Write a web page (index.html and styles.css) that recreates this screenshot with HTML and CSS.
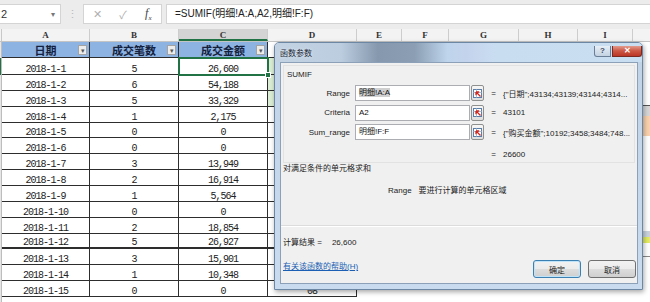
FILE: index.html
```html
<!DOCTYPE html>
<html lang="zh">
<head>
<meta charset="utf-8">
<title>SUMIF 函数参数</title>
<link rel="stylesheet" href="styles.css">
</head>
<body>
	<div class="fbar">
		<div class="namebox"><span>2</span><span class="caret">&#9662;</span></div>
		<div class="grip">&#8942;</div>
		<div class="fxbox">
			<span class="fxbtn">&#10005;</span>
			<span class="fxbtn">&#10003;</span>
			<span class="fxbtn fx">f<sub>x</sub></span>
		</div>
		<div class="formula">=SUMIF(明细!A:A,A2,明细!F:F)</div>
	</div>

	<div class="colheads">
		<div class="corner"></div>
		<div class="ch w-a">A</div>
		<div class="ch w-b">B</div>
		<div class="ch w-c sel">C</div>
		<div class="ch w-d">D</div>
		<div class="ch w-e">E</div>
		<div class="ch w-f">F</div>
		<div class="ch w-g">G</div>
		<div class="ch w-h">H</div>
		<div class="ch w-i">I</div>
		<div class="ch w-j"></div>
	</div>

	<div class="sheet">
		<div class="rowstrip"><div class="rowsel"></div></div>
		<div class="table">
			<div class="c hd">日期<span class="dd">&#9662;</span></div>
			<div class="c hd">成交笔数<span class="dd">&#9662;</span></div>
			<div class="c hd">成交金额<span class="dd">&#9662;</span></div>
			<div class="c hd-d"></div>

			<div class="c">2018-1-1</div><div class="c">5</div><div class="c active">26,600<span class="handle"></span></div><div class="c green"></div>
			<div class="c">2018-1-2</div><div class="c">6</div><div class="c">54,188</div><div class="c green"></div>
			<div class="c">2018-1-3</div><div class="c">5</div><div class="c">33,329</div><div class="c green"></div>
			<div class="c">2018-1-4</div><div class="c">1</div><div class="c">2,175</div><div class="c"></div>
			<div class="c">2018-1-5</div><div class="c">0</div><div class="c">0</div><div class="c"></div>
			<div class="c">2018-1-6</div><div class="c">0</div><div class="c">0</div><div class="c"></div>
			<div class="c">2018-1-7</div><div class="c">3</div><div class="c">13,949</div><div class="c"></div>
			<div class="c">2018-1-8</div><div class="c">2</div><div class="c">16,914</div><div class="c"></div>
			<div class="c">2018-1-9</div><div class="c">1</div><div class="c">5,564</div><div class="c"></div>
			<div class="c">2018-1-10</div><div class="c">0</div><div class="c">0</div><div class="c"></div>
			<div class="c">2018-1-11</div><div class="c">2</div><div class="c">18,854</div><div class="c"></div>
			<div class="c thick">2018-1-12</div><div class="c thick">5</div><div class="c thick">26,927</div><div class="c thick"></div>
			<div class="c">2018-1-13</div><div class="c">3</div><div class="c">15,901</div><div class="c"></div>
			<div class="c">2018-1-14</div><div class="c">1</div><div class="c">10,348</div><div class="c"></div>
			<div class="c">2018-1-15</div><div class="c">0</div><div class="c">0</div><div class="c">08</div>
		</div>
		<div class="rest">
			<div class="colj">
				<div class="j-head"></div>
				<div class="j-peach"></div>
				<div class="j-gray"></div>
				<div class="j-yellow"></div>
				<div class="j-box">C</div>
			</div>
		</div>
	</div>

	<div class="dialog">
		<div class="titlebar">
			<span class="title">函数参数</span>
			<div class="caps">
				<span class="cap help">?</span>
				<span class="cap close">&#10005;</span>
			</div>
		</div>
		<div class="body">
			<div class="group">
				<div class="fname">SUMIF</div>
				<div class="args">
					<div class="arg">
						<span class="lbl">Range</span>
						<span class="input"><span class="hl">明细!A:A</span></span>
						<span class="ref"><svg width="9" height="9" viewBox="0 0 9 9"><rect x="0.5" y="0.5" width="8" height="8" fill="#fff" stroke="#5b7fa8"/><path d="M0.5 3.5h8M3.5 0.5v8" stroke="#a9bdd4"/><path d="M7.5 7.5L3 3M3 3h3.2M3 3v3.2" stroke="#d2261d" stroke-width="1.3" fill="none"/></svg></span>
						<span class="eq">=</span>
						<span class="val">{"日期";43134;43139;43144;4314...</span>
					</div>
					<div class="arg">
						<span class="lbl">Criteria</span>
						<span class="input">A2</span>
						<span class="ref"><svg width="9" height="9" viewBox="0 0 9 9"><rect x="0.5" y="0.5" width="8" height="8" fill="#fff" stroke="#5b7fa8"/><path d="M0.5 3.5h8M3.5 0.5v8" stroke="#a9bdd4"/><path d="M7.5 7.5L3 3M3 3h3.2M3 3v3.2" stroke="#d2261d" stroke-width="1.3" fill="none"/></svg></span>
						<span class="eq">=</span>
						<span class="val">43101</span>
					</div>
					<div class="arg">
						<span class="lbl">Sum_range</span>
						<span class="input">明细!F:F</span>
						<span class="ref"><svg width="9" height="9" viewBox="0 0 9 9"><rect x="0.5" y="0.5" width="8" height="8" fill="#fff" stroke="#5b7fa8"/><path d="M0.5 3.5h8M3.5 0.5v8" stroke="#a9bdd4"/><path d="M7.5 7.5L3 3M3 3h3.2M3 3v3.2" stroke="#d2261d" stroke-width="1.3" fill="none"/></svg></span>
						<span class="eq">=</span>
						<span class="val">{"购买金额";10192;3458;3484;748...</span>
					</div>
				</div>
				<div class="total"><span class="eq">=</span><span class="val">26600</span></div>
			</div>
			<div class="desc">对满足条件的单元格求和</div>
			<div class="argdesc"><span class="argname">Range</span>要进行计算的单元格区域</div>
			<div class="sep"></div>
			<div class="foot">
				<div class="result">
					<div>计算结果 =<span class="resval">26,600</span></div>
					<a class="help-link" href="#">有关该函数的帮助(H)</a>
				</div>
				<div class="buttons">
					<button class="btn default">确定</button>
					<button class="btn">取消</button>
				</div>
			</div>
		</div>
	</div>
</body>
</html>
```

FILE: styles.css
```css
* {
	box-sizing: border-box;
}

body {
	margin: 0;
	width: 650px;
	height: 302px;
	overflow: hidden;
	position: relative;
	background: #fff;
	font-family: "Liberation Sans", "Noto Sans CJK SC", sans-serif;
	color: #222;
}

/* formula bar */
.fbar {
	height: 29px;
	padding-top: 4px;
	display: flex;
	align-items: flex-start;
	background: #ececec;
}

.namebox {
	width: 61px;
	height: 20px;
	display: flex;
	align-items: center;
	justify-content: space-between;
	padding: 0 5px 0 1px;
	background: #fff;
	border: 1px solid #d4d4d4;
	border-left: none;
	font-size: 11px;
	color: #333;
}
.caret {font-size: 8px; color: #777;}

.grip {
	width: 22px;
	text-align: center;
	line-height: 20px;
	font-size: 11px;
	color: #b8b8b8;
}

.fxbox {
	width: 79px;
	height: 20px;
	display: flex;
	align-items: center;
	padding-left: 1px;
	background: #fff;
	border: 1px solid #d4d4d4;
}
.fxbtn {
	width: 26px;
	text-align: center;
	font-size: 11px;
	color: #b0b0b0;
}
.fx {
	font-family: "Liberation Serif", serif;
	font-style: italic;
	font-size: 12px;
	color: #444;
}
.fx sub {font-size: 7px;}

.formula {
	flex: 1;
	height: 20px;
	margin-left: 4px;
	padding-left: 8px;
	line-height: 18px;
	font-size: 10px;
	color: #222;
	background: #fff;
	border: 1px solid #d4d4d4;
	border-right: none;
}

/* column headers */
.colheads {
	height: 13px;
	display: flex;
	background: #f3f3f3;
	border-bottom: 1px solid #c4c4c4;
}
.corner {width: 2px; border-right: 1px solid #c8c8c8;}
.ch {
	border-right: 1px solid #cdcdcd;
	text-align: center;
	line-height: 13px;
	font-family: "Liberation Serif", serif;
	font-weight: bold;
	font-size: 9px;
	color: #333;
}
.ch.sel {
	background: #d4d4d4;
	border-bottom: 2px solid #217346;
}
.w-a {width: 88px;}
.w-b {width: 89px;}
.w-c {width: 89px;}
.w-d {width: 89px;}
.w-e {width: 45px;}
.w-f {width: 47px;}
.w-g {width: 70px;}
.w-h {width: 59px;}
.w-i {width: 55px;}
.w-j {flex: 1; border-right: none;}

/* sheet */
.sheet {
	display: flex;
	height: 260px;
}

.rowstrip {
	width: 2px;
	background: #e6e6e6;
	border-right: 1px solid #bdbdbd;
}
.rowsel {
	margin-top: 16px;
	height: 17px;
	background: #217346;
}

.table {
	display: grid;
	grid-template-columns: 88px 89px 89px 89px;
	grid-template-rows: 16px 17px repeat(14, 15.86px);
	align-self: flex-start;
}

.c {
	position: relative;
	display: flex;
	align-items: flex-end;
	justify-content: center;
	border-right: 1px solid #2d2d2d;
	border-bottom: 1px solid #2d2d2d;
	font-family: "Liberation Mono", monospace;
	font-size: 10px;
	line-height: 8px;
	letter-spacing: -1px;
	color: #222;
}
.c.thick {border-bottom-width: 2px;}

.c.hd {
	align-items: center;
	background: #8db3e2;
	font-family: "Noto Sans CJK SC", sans-serif;
	font-weight: bold;
	font-size: 11px;
	line-height: 14px;
	letter-spacing: 0;
	color: #14213d;
}
.hd-d {
	border-right: 1px solid #2d2d2d;
	border-bottom: 1px solid #2d2d2d;
}

.dd {
	position: absolute;
	right: 2px;
	top: 3px;
	width: 9px;
	height: 10px;
	line-height: 9px;
	text-align: center;
	font-size: 7px;
	font-weight: normal;
	color: #555;
	background: #ececec;
	border: 1px solid #a3a3a3;
}

.c.active {
	outline: 2px solid #217346;
	outline-offset: -1px;
	z-index: 1;
}
.handle {
	position: absolute;
	right: -4px;
	bottom: -4px;
	width: 6px;
	height: 6px;
	background: #217346;
	border: 1px solid #fff;
}
.c.green {background: #dbeed5;}

.rest {
	flex: 1;
	display: flex;
}
.colj {
	margin-left: auto;
	width: 17px;
	display: flex;
	flex-direction: column;
}
.j-head {
	margin-top: 63px;
	height: 11px;
	background: #d6d6d6;
	border-top: 1px solid #555;
}
.j-peach {height: 20px; background: #f9d2ad;}
.j-gray {margin-top: 95px; height: 6px; background: #c9d3dc;}
.j-yellow {height: 6px; background: #e3ec62;}
.j-box {
	height: 14px;
	border-left: 1px solid #888;
	border-bottom: 1px solid #888;
	padding-left: 2px;
	font-size: 9px;
	line-height: 20px;
	color: #333;
}

/* dialog */
.dialog {
	position: absolute;
	left: 274px;
	top: 42px;
	width: 369px;
	height: 248px;
	display: flex;
	flex-direction: column;
	padding: 0 4px 5px 5px;
	background: linear-gradient(#c0d3e7, #c9dcef);
	border: 1px solid #6c87a4;
	border-radius: 5px 5px 0 0;
	box-shadow: 1px 2px 5px rgba(0, 0, 0, 0.35);
	font-size: 8px;
}

.titlebar {
	height: 19px;
	margin: 0 -4px 0 -5px;
	padding: 0 2px 0 5px;
	display: flex;
	justify-content: space-between;
	background: linear-gradient(to right, #c3d3e3 0%, #bccde0 18%, #8598ad 28%, #8b9eb3 38%, #bed5ec 47%, #c4d3ec 52%, #c9ddf1 60%, #cadef2 100%);
	border-radius: 4px 4px 0 0;
}
.title {
	padding-top: 6px;
	line-height: 9px;
	color: #1d2733;
	text-shadow: 0 0 3px #e8f0f8;
}
.caps {
	display: flex;
	gap: 1px;
	padding-top: 3px;
	margin-right: -2px;
}
.cap {
	height: 11px;
	text-align: center;
	line-height: 10px;
	border: 1px solid #6a7f96;
	border-top: none;
}
.help {
	width: 17px;
	font-size: 8px;
	font-weight: bold;
	color: #3e4e62;
	background: linear-gradient(#e6eef6, #c3d2e2);
	border-radius: 0 0 0 3px;
}
.close {
	width: 30px;
	font-size: 8px;
	font-weight: bold;
	color: #fff;
	background: linear-gradient(#e29a8c, #cc5644 50%, #bb3626);
	border-color: #7b2a22;
	border-radius: 0 0 3px 0;
}

.body {
	flex: 1;
	display: flex;
	flex-direction: column;
	background: #f0f0f0;
	border: 1px solid #8ca1b7;
}

.group {
	margin: 2px 2px 0;
	padding: 3px 0 2px 0;
	border: 1px solid #e2e2e2;
}
.fname {
	padding-left: 3px;
	line-height: 11px;
	color: #222;
}

.args {
	margin-top: 5px;
	display: flex;
	flex-direction: column;
	gap: 3.5px;
}
.arg {
	height: 16px;
	display: flex;
	align-items: center;
}
.lbl {
	width: 66px;
	text-align: right;
	color: #222;
}
.input {
	width: 115px;
	height: 16px;
	margin-left: 5px;
	padding-left: 3px;
	line-height: 14px;
	background: #fff;
	border: 1px solid #abadb3;
	color: #111;
}
.hl {background: #cfcfcf;}
.ref {
	width: 13px;
	height: 16px;
	margin-left: 1px;
	display: flex;
	align-items: center;
	justify-content: center;
	background: linear-gradient(#f7f7f7, #dedede);
	border: 1px solid #8e8f8f;
	border-radius: 2px;
}
.eq {
	width: 5px;
	margin-left: 7px;
	text-align: center;
}
.val {
	margin-left: 7px;
	white-space: nowrap;
	color: #1a1a1a;
}

.total {
	margin-top: 9px;
	padding-left: 207px;
	display: flex;
	line-height: 11px;
}
.total .eq {margin-left: 0;}

.desc {
	padding-left: 2px;
	line-height: 11px;
}
.argdesc {
	margin-top: 11px;
	padding-left: 107px;
	line-height: 11px;
}
.argname {margin-right: 7px;}

.sep {
	margin-top: 29px;
	border-top: 1px solid #dcdcdc;
	border-bottom: 1px solid #fff;
}

.foot {
	flex: 1;
	display: flex;
	justify-content: space-between;
	padding: 0 1px 5px 2px;
}
.result {
	padding-top: 10px;
	line-height: 11px;
}
.resval {margin-left: 10px;}
.help-link {
	display: block;
	margin-top: 13px;
	color: #1a5fb4;
	text-decoration: underline;
}

.buttons {
	align-self: flex-end;
	display: flex;
	gap: 7px;
}
.btn {
	width: 48px;
	height: 18px;
	padding: 0;
	font-family: "Noto Sans CJK SC", sans-serif;
	font-size: 8px;
	color: #222;
	background: linear-gradient(#f2f2f2, #ebebeb 50%, #dddddd 51%, #cfcfcf);
	border: 1px solid #707070;
	border-radius: 3px;
}
.btn.default {
	border-color: #3c7fb1;
	box-shadow: inset 0 0 0 1px #bfe3f8;
}
```
